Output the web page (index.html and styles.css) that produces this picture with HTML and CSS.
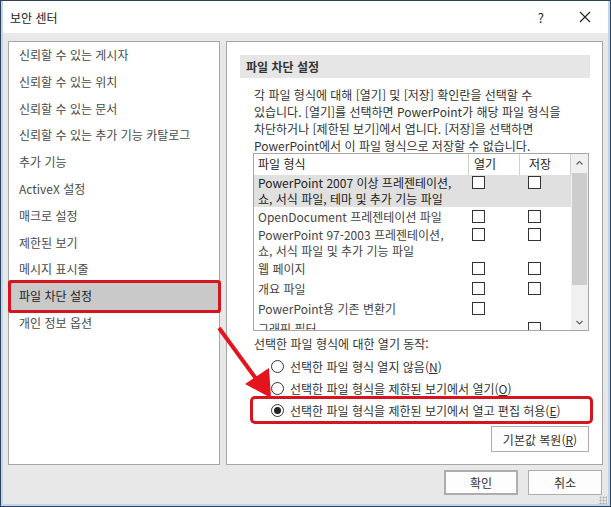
FILE: index.html
```html
<!DOCTYPE html>
<html lang="ko">
<head>
<meta charset="UTF-8" />
<title>보안 센터</title>
<link rel="stylesheet" href="styles.css">
</head>
<body>

<div class="window">
  <div class="titlebar">
    <span class="title">보안 센터</span>
    <span class="help">?</span>
    <svg class="close" width="12" height="12" viewBox="0 0 12 12">
      <path d="M1 1 L11 11 M11 1 L1 11" stroke="#222" stroke-width="1.1" fill="none"/>
    </svg>
  </div>

  <div class="body">
    <div class="main">
      <ul class="nav">
        <li>신뢰할 수 있는 게시자</li>
        <li>신뢰할 수 있는 위치</li>
        <li>신뢰할 수 있는 문서</li>
        <li>신뢰할 수 있는 추가 기능 카탈로그</li>
        <li>추가 기능</li>
        <li>ActiveX 설정</li>
        <li>매크로 설정</li>
        <li>제한된 보기</li>
        <li>메시지 표시줄</li>
        <li class="active">파일 차단 설정</li>
        <li>개인 정보 옵션</li>
      </ul>

      <div class="content">
        <div class="section-head">파일 차단 설정</div>
        <p class="desc">각 파일 형식에 대해 [열기] 및 [저장] 확인란을 선택할 수<br>있습니다. [열기]를 선택하면 PowerPoint가 해당 파일 형식을<br>차단하거나 [제한된 보기]에서 엽니다. [저장]을 선택하면<br>PowerPoint에서 이 파일 형식으로 저장할 수 없습니다.</p>

        <div class="filetable">
          <div class="rows">
            <div class="row head">
              <span class="c-name">파일 형식</span>
              <span class="c-open">열기</span>
              <span class="c-save">저장</span>
            </div>
            <div class="row double selected">
              <span class="c-name">PowerPoint 2007 이상 프레젠테이션,<br>쇼, 서식 파일, 테마 및 추가 기능 파일</span>
              <span class="c-open"><i class="check"></i></span>
              <span class="c-save"><i class="check"></i></span>
            </div>
            <div class="row">
              <span class="c-name">OpenDocument 프레젠테이션 파일</span>
              <span class="c-open"><i class="check"></i></span>
              <span class="c-save"><i class="check"></i></span>
            </div>
            <div class="row double">
              <span class="c-name">PowerPoint 97-2003 프레젠테이션,<br>쇼, 서식 파일 및 추가 기능 파일</span>
              <span class="c-open"><i class="check"></i></span>
              <span class="c-save"><i class="check"></i></span>
            </div>
            <div class="row">
              <span class="c-name">웹 페이지</span>
              <span class="c-open"><i class="check"></i></span>
              <span class="c-save"><i class="check"></i></span>
            </div>
            <div class="row">
              <span class="c-name">개요 파일</span>
              <span class="c-open"><i class="check"></i></span>
              <span class="c-save"><i class="check"></i></span>
            </div>
            <div class="row">
              <span class="c-name">PowerPoint용 기존 변환기</span>
              <span class="c-open"><i class="check"></i></span>
              <span class="c-save"></span>
            </div>
            <div class="row">
              <span class="c-name">그래픽 필터</span>
              <span class="c-open"></span>
              <span class="c-save"><i class="check"></i></span>
            </div>
          </div>
          <div class="scrollbar">
            <svg class="sb-btn" width="17" height="19" viewBox="0 0 17 19">
              <path d="M5.5 10.5 L8.5 7.5 L11.5 10.5" stroke="#606060" stroke-width="1.2" fill="none"/>
            </svg>
            <div class="sb-thumb"></div>
            <div class="sb-track"></div>
            <svg class="sb-btn" width="17" height="14" viewBox="0 0 17 14">
              <path d="M5.5 5 L8.5 8 L11.5 5" stroke="#606060" stroke-width="1.2" fill="none"/>
            </svg>
          </div>
        </div>

        <div class="action-label">선택한 파일 형식에 대한 열기 동작:</div>
        <div class="radios">
          <div class="radio"><i class="dot"></i>선택한 파일 형식 열지 않음(<u>N</u>)</div>
          <div class="radio"><i class="dot"></i>선택한 파일 형식을 제한된 보기에서 열기(<u>O</u>)</div>
          <div class="radio marked"><i class="dot on"></i>선택한 파일 형식을 제한된 보기에서 열고 편집 허용(<u>E</u>)</div>
        </div>
        <div class="restore-row">
          <button class="btn restore">기본값 복원(<u>R</u>)</button>
        </div>
      </div>
    </div>

    <div class="footer">
      <button class="btn default">확인</button>
      <button class="btn">취소</button>
      <span class="grip"></span>
    </div>
  </div>

  <svg class="arrow" width="80" height="90" viewBox="0 0 80 90">
    <path d="M2 2 L40 54" stroke="#e4141c" stroke-width="4" fill="none"/>
    <path d="M28 58 L52 42 L54 72 Z" fill="#e4141c"/>
  </svg>
</div>

</body>
</html>
```

FILE: styles.css
```css
* {
  box-sizing: border-box;
}

body {
  margin: 0;
  width: 611px;
  height: 507px;
  font-family: "Noto Sans CJK KR", "Noto Sans", sans-serif;
  font-size: 12px;
  color: #333;
  overflow: hidden;
}

.window {
  position: relative;
  width: 611px;
  height: 507px;
  border: 1px solid #2f4257;
  background: #bfd6ee;
  padding: 0 2px 2px;
  display: flex;
  flex-direction: column;
}

.titlebar {
  height: 32px;
  background: #fff;
  display: flex;
  align-items: center;
  padding-left: 7px;
}

.title {
  font-size: 12px;
  color: #222;
  flex: 1;
}

.help {
  font-size: 13px;
  color: #222;
  margin-right: 35px;
}

.close {
  margin-right: 17px;
}

.body {
  flex: 1;
  background: #e8e8e8;
  display: flex;
  flex-direction: column;
  padding: 8px 5px 0;
}

.main {
  display: flex;
  gap: 6px;
  height: 424px;
}

/* left category list */
.nav {
  list-style: none;
  margin: 0;
  padding: 0;
  width: 212px;
  background: #fff;
  border: 1px solid #a6a6a6;
}

.nav li {
  height: 26.8px;
  line-height: 26.8px;
  padding-left: 8px;
  margin: 0 1px 0 2px;
  color: #4a4a4a;
  white-space: nowrap;
}

.nav li.active {
  background: #c9c9c9;
  color: #222;
  border-radius: 1px;
  box-shadow: 0 0 0 3px #d6161e;
}

/* right settings pane */
.content {
  flex: 1;
  background: #fff;
  border: 1px solid #a6a6a6;
  padding: 13px 12px 0 13px;
}

.section-head {
  height: 23px;
  line-height: 23px;
  background: #e6e6e6;
  padding-left: 6px;
  font-weight: bold;
  color: #333;
}

.desc {
  margin: 8px 0 0 14px;
  line-height: 17px;
  color: #333;
  white-space: nowrap;
}

.filetable {
  margin: -1px 1px 0 13px;
  height: 178px;
  border: 1px solid #a6a6a6;
  display: flex;
  overflow: hidden;
}

.rows {
  flex: 1;
}

.row {
  display: flex;
  line-height: 16px;
  padding: 2px 0;
  color: #444;
}

.row.double {
  padding: 0;
}

.row.head {
  height: 21px;
  line-height: 19px;
  padding: 0;
  color: #222;
}

.row.selected {
  background: #e0e0e0;
  color: #222;
}

.c-name {
  width: 214px;
  padding-left: 4px;
  white-space: nowrap;
}

.c-open {
  width: 51px;
  padding-left: 4px;
}

.c-save {
  width: 52px;
  padding-left: 9px;
}

.head .c-open {
  padding-left: 5px;
  border-left: 1px solid #d0d0d0;
}

.head .c-save {
  padding-left: 9px;
  border-left: 1px solid #d0d0d0;
  border-right: 1px solid #d0d0d0;
}

.check {
  display: block;
  width: 13px;
  height: 13px;
  margin-top: 1px;
  border: 1px solid #333;
  background: #fff;
}

.scrollbar {
  width: 17px;
  background: #f0f0f0;
  display: flex;
  flex-direction: column;
}

.sb-thumb {
  height: 112px;
  background: #cdcdcd;
  margin: 0 1px;
}

.sb-track {
  flex: 1;
}

/* open action radios */
.action-label {
  margin: 5px 0 0 14px;
  line-height: 16px;
  color: #333;
}

.radios {
  margin-top: 3px;
}

.radio {
  height: 22px;
  display: flex;
  align-items: center;
  padding-left: 18px;
  margin-left: 13px;
  color: #333;
  white-space: nowrap;
}

.radio.marked {
  border-radius: 2px;
  box-shadow: 0 0 0 3px #d6161e;
}

.dot {
  width: 13px;
  height: 13px;
  border: 1px solid #333;
  border-radius: 50%;
  margin-right: 6px;
  position: relative;
}

.dot.on::after {
  content: "";
  position: absolute;
  left: 2px;
  top: 2px;
  width: 7px;
  height: 7px;
  border-radius: 50%;
  background: #222;
}

.restore-row {
  display: flex;
  justify-content: flex-end;
  margin: 5px 1px 0 0;
}

.btn {
  font-family: inherit;
  font-size: 12px;
  color: #333;
  background: #fdfdfd;
  border: 1px solid #adadad;
  height: 26px;
  padding: 0;
  cursor: pointer;
}

.btn.restore {
  width: 98px;
  flex: 0 0 98px;
}

.footer {
  position: relative;
  flex: 1;
  display: flex;
  justify-content: flex-end;
  align-items: flex-start;
  gap: 10px;
  padding: 5px 1px 0 0;
}

.footer .btn {
  width: 74px;
  height: 25px;
}

.btn.default {
  border: 2px solid #adadad;
}

.grip {
  position: absolute;
  right: -4px;
  bottom: 0;
  width: 8px;
  height: 8px;
  background: radial-gradient(circle, #a8a8a8 0.8px, transparent 1.2px) 0 0 / 3px 3px;
}

.arrow {
  position: absolute;
  left: 216px;
  top: 325px;
}
```
